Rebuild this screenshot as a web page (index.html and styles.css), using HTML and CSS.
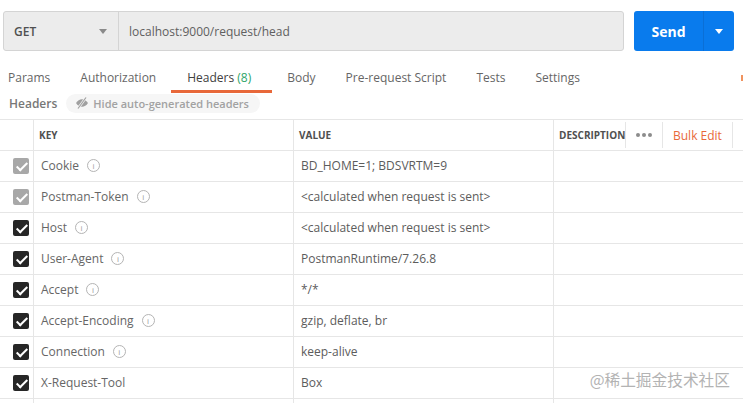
FILE: index.html
```html
<!DOCTYPE html>
<html lang="en">

<head>
  <meta charset="UTF-8">
  <title>Postman Headers</title>
  <link rel="stylesheet" href="styles.css">
</head>

<body>
  <div class="request-bar">
    <div class="url-box">
      <div class="method">
        <span>GET</span>
        <span class="caret"></span>
      </div>
      <div class="url">localhost:9000/request/head</div>
    </div>
    <div class="send">
      <span class="send-label">Send</span>
      <span class="send-more"><span class="caret caret-white"></span></span>
    </div>
  </div>

  <div class="tabs">
    <div class="tab">Params</div>
    <div class="tab">Authorization</div>
    <div class="tab tab-active">Headers <span class="count">(8)</span></div>
    <div class="tab">Body</div>
    <div class="tab">Pre-request Script</div>
    <div class="tab">Tests</div>
    <div class="tab">Settings</div>
    <span class="tab-dot"></span>
  </div>

  <div class="sub-bar">
    <span class="sub-title">Headers</span>
    <span class="hide-pill">
      <svg class="eye" viewBox="0 0 14 12" width="14" height="12">
        <path d="M1 6c1.6-2.5 3.6-3.8 6-3.8S11.4 3.500 13 6c-1.600 2.500-3.600 3.800-6 3.800S2.600 8.500 1 6z" fill="#a0a0a0" />
        <path d="M3 11.500 11 .5" stroke="#f6f6f6" stroke-width="2.400" />
        <path d="M3 11.500 11 .5" stroke="#a0a0a0" stroke-width="1.200" />
      </svg>
      Hide auto-generated headers
    </span>
  </div>

  <div class="table">
    <div class="row row-head">
      <div class="cell cell-check"></div>
      <div class="cell cell-key">KEY</div>
      <div class="cell cell-value">VALUE</div>
      <div class="cell cell-desc">DESCRIPTION</div>
      <div class="cell cell-dots"><span></span><span></span><span></span></div>
      <div class="cell cell-bulk">Bulk Edit</div>
      <div class="cell cell-end"></div>
    </div>

    <div class="row">
      <div class="cell cell-check"><span class="check check-off"></span></div>
      <div class="cell cell-key">Cookie <span class="info">i</span></div>
      <div class="cell cell-value">BD_HOME=1; BDSVRTM=9</div>
      <div class="cell cell-rest"></div>
    </div>
    <div class="row">
      <div class="cell cell-check"><span class="check check-off"></span></div>
      <div class="cell cell-key">Postman-Token <span class="info">i</span></div>
      <div class="cell cell-value">&lt;calculated when request is sent&gt;</div>
      <div class="cell cell-rest"></div>
    </div>
    <div class="row">
      <div class="cell cell-check"><span class="check"></span></div>
      <div class="cell cell-key">Host <span class="info">i</span></div>
      <div class="cell cell-value">&lt;calculated when request is sent&gt;</div>
      <div class="cell cell-rest"></div>
    </div>
    <div class="row">
      <div class="cell cell-check"><span class="check"></span></div>
      <div class="cell cell-key">User-Agent <span class="info">i</span></div>
      <div class="cell cell-value">PostmanRuntime/7.26.8</div>
      <div class="cell cell-rest"></div>
    </div>
    <div class="row">
      <div class="cell cell-check"><span class="check"></span></div>
      <div class="cell cell-key">Accept <span class="info">i</span></div>
      <div class="cell cell-value">*/*</div>
      <div class="cell cell-rest"></div>
    </div>
    <div class="row">
      <div class="cell cell-check"><span class="check"></span></div>
      <div class="cell cell-key">Accept-Encoding <span class="info">i</span></div>
      <div class="cell cell-value">gzip, deflate, br</div>
      <div class="cell cell-rest"></div>
    </div>
    <div class="row">
      <div class="cell cell-check"><span class="check"></span></div>
      <div class="cell cell-key">Connection <span class="info">i</span></div>
      <div class="cell cell-value">keep-alive</div>
      <div class="cell cell-rest"></div>
    </div>
    <div class="row">
      <div class="cell cell-check"><span class="check"></span></div>
      <div class="cell cell-key">X-Request-Tool</div>
      <div class="cell cell-value">Box</div>
      <div class="cell cell-rest"></div>
    </div>
    <div class="row">
      <div class="cell cell-check"></div>
      <div class="cell cell-key"></div>
      <div class="cell cell-value"></div>
      <div class="cell cell-rest"></div>
    </div>
  </div>

  <div class="watermark">@稀土掘金技术社区</div>
</body>

</html>
```

FILE: styles.css
```css
html,
body {
  height: 403px;
  overflow: hidden;
}

body {
  position: relative;
  margin: 0;
  font-family: 'Open Sans', sans-serif;
  font-size: 12px;
  color: #555;
  background-color: #fff;
}

.request-bar {
  display: flex;
  padding: 11px 9px 0 3px;
  height: 40px;
}

.url-box {
  display: flex;
  width: 621px;
  height: 40px;
  box-sizing: border-box;
  background-color: #ececec;
  border: 1px solid #d4d4d4;
  border-radius: 3px;
}

.method {
  display: flex;
  align-items: center;
  justify-content: space-between;
  width: 115px;
  box-sizing: border-box;
  padding: 0 11px 0 10px;
  border-right: 1px solid #d4d4d4;
  font-weight: 600;
  color: #505050;
}

.url {
  padding-left: 10px;
  line-height: 39px;
  color: #606060;
}

.caret {
  width: 0;
  height: 0;
  border-left: 4px solid transparent;
  border-right: 4px solid transparent;
  border-top: 5px solid #8a8a8a;
}

.caret-white {
  border-top-color: #fff;
}

.send {
  display: flex;
  width: 100px;
  height: 40px;
  margin-left: 10px;
  background-color: #097bed;
  border-radius: 3px;
  color: #fff;
  font-size: 14px;
  font-weight: 700;
}

.send-label {
  width: 69px;
  text-align: center;
  line-height: 41px;
}

.send-more {
  display: flex;
  flex: 1;
  align-items: center;
  justify-content: center;
  border-left: 1px solid #0a6fd6;
}

.tabs {
  position: relative;
  display: flex;
  height: 42px;
}

.tab {
  height: 40px;
  box-sizing: border-box;
  padding: 18px 15px 0;
  line-height: 18px;
  color: #666;
  white-space: nowrap;
}

.tab:first-child {
  padding-left: 8px;
}

.tab-active {
  padding-left: 16px;
  padding-right: 21px;
  height: 42px;
  color: #404040;
  border-bottom: 3px solid #e8683a;
}

.count {
  color: #2fa56a;
}

.tab-dot {
  position: absolute;
  right: 0;
  top: 24px;
  width: 2px;
  height: 6px;
  background-color: #f0935f;
}

.sub-bar {
  display: flex;
  align-items: center;
  height: 26px;
  padding: 0 0 6px 9px;
  box-sizing: border-box;
}

.sub-title {
  font-size: 12px;
  font-weight: 600;
  color: #777;
}

.hide-pill {
  display: flex;
  align-items: center;
  gap: 4px;
  height: 19px;
  margin-left: 9px;
  padding: 0 11px 0 9px;
  background-color: #f6f6f6;
  border-radius: 10px;
  font-size: 11px;
  font-weight: 600;
  color: #a2a2a2;
}

.table {
  height: 284px;
  overflow: hidden;
  border-top: 1px solid #e6e6e6;
}

.row {
  display: flex;
  height: 31px;
  box-sizing: border-box;
  border-bottom: 1px solid #e6e6e6;
}

.row-head {
  height: 31px;
  font-size: 10px;
  font-weight: 700;
  color: #505050;
}

.cell {
  display: flex;
  align-items: center;
  box-sizing: border-box;
  border-right: 1px solid #e6e6e6;
  padding-left: 7px;
  white-space: nowrap;
}

.cell-check {
  width: 34px;
  padding-left: 13px;
}

.cell-key {
  width: 260px;
  gap: 8px;
  padding-bottom: 2px;
  color: #666;
}

.row-head .cell-key,
.row-head .cell-value {
  padding-left: 5px;
  padding-bottom: 0;
  color: #505050;
}

.cell-value {
  width: 260px;
  padding-bottom: 2px;
  color: #5c5c5c;
}

.cell-desc {
  width: 72px;
  padding-left: 5px;
  overflow: hidden;
}

.cell-dots {
  width: 37px;
  gap: 2px;
  padding-left: 10px;
}

.cell-dots span {
  width: 4px;
  height: 4px;
  border-radius: 50%;
  background-color: #8c8c8c;
}

.row-head .cell-bulk {
  width: 70px;
  padding-left: 10px;
  font-size: 12px;
  font-weight: 400;
  color: #e8683a;
}

.cell-end {
  flex: 1;
  border-right: 0;
}

.cell-rest {
  flex: 1;
  border-right: 0;
}

.row-head .cell-desc,
.row-head .cell-dots,
.row-head .cell-bulk {
  margin-top: 2px;
  margin-bottom: 2px;
}

.check {
  position: relative;
  width: 16px;
  height: 16px;
  background-color: #262626;
  border-radius: 2px;
}

.check-off {
  background-color: #a8a8a8;
}

.check::after {
  content: "";
  position: absolute;
  left: 5.500px;
  top: 1.500px;
  width: 4px;
  height: 9px;
  border-right: 2px solid #fff;
  border-bottom: 2px solid #fff;
  transform: rotate(45deg);
}

.info {
  display: inline-block;
  width: 11px;
  height: 11px;
  border: 1px solid #b4b4b4;
  border-radius: 50%;
  font-size: 8px;
  line-height: 11px;
  text-align: center;
  color: #999;
}

.watermark {
  position: absolute;
  right: 13px;
  top: 370px;
  font-family: 'Noto Sans CJK SC', sans-serif;
  font-size: 15.700px;
  line-height: 20px;
  color: #b3b3b3;
}
```
